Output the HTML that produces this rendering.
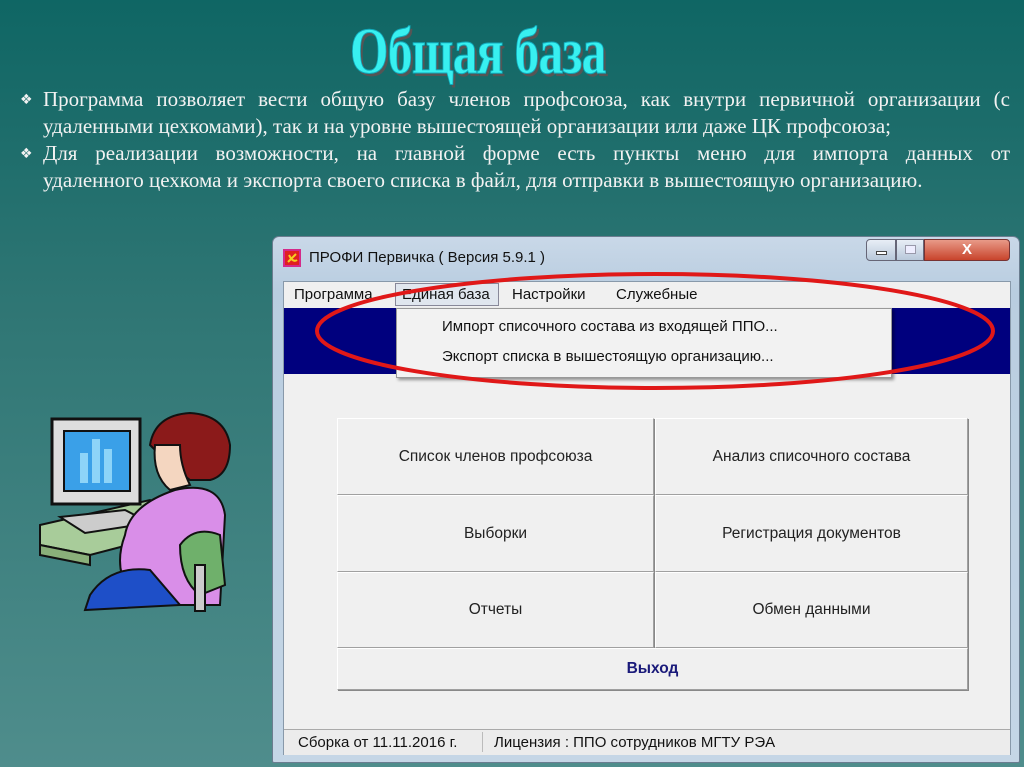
<!DOCTYPE html>
<html><head><meta charset="utf-8"><style>
*{margin:0;padding:0;box-sizing:border-box}
body{width:1024px;height:767px;overflow:hidden;position:relative;background:linear-gradient(180deg,#0f6664 0%,#2f7674 40%,#4f8d8c 100%);font-family:"Liberation Sans","DejaVu Sans",sans-serif}
.title{position:absolute;left:350px;top:14px;font-family:"Liberation Serif",serif;font-size:66px;color:#38f0f0;transform:scaleX(0.75);transform-origin:left top;text-shadow:3px 3px 0 #555;letter-spacing:-1px;font-weight:bold;-webkit-text-stroke:1px #1ab;}
.txt{position:absolute;left:20px;top:86px;width:990px;font-family:"Liberation Serif",serif;font-size:21px;line-height:27px;color:#f2f2f2}
.txt p{padding-left:23px;position:relative;white-space:nowrap}
.txt .j{display:block;text-align:justify;text-align-last:justify;white-space:normal}
.txt p:before{content:"❖";position:absolute;left:0;top:1px;font-size:14px;font-family:"DejaVu Sans",sans-serif}
.sans{font-family:"Liberation Sans",sans-serif}
.win{position:absolute;left:272px;top:236px;width:748px;height:527px;background:linear-gradient(180deg,#c9d8e8,#b9cde0 10%,#c5d6e6);border:1px solid #6b7d90;border-radius:7px 7px 2px 2px}
.client{position:absolute;left:10px;top:44px;width:728px;height:474px;background:#f0f0f0;border:1px solid #8899aa}
.t{position:absolute;font-size:14px;color:#111}
.btn{position:absolute;background:#f0f0f0;border:1px solid #a0a0a0;border-top-color:#fff;border-left-color:#fff;box-shadow:1px 1px 0 #888;display:flex;align-items:center;justify-content:center;font-size:15.5px;color:#222}
</style></head><body>
<div class="title">Общая база</div>
<div class="txt">
<p><span class="j">Программа позволяет вести общую базу членов профсоюза, как внутри первичной организации (с</span>удаленными цехкомами), так и на уровне вышестоящей организации или даже ЦК профсоюза;</p>
<p><span class="j">Для реализации возможности, на главной форме есть пункты меню для импорта данных от</span>удаленного цехкома и экспорта своего списка в файл, для отправки в вышестоящую организацию.</p>
</div>

<svg style="position:absolute;left:30px;top:405px" width="210" height="210" viewBox="0 0 210 210">
<polygon points="10,120 120,95 175,120 60,150 10,140" fill="#a8cc9a" stroke="#111" stroke-width="2"/>
<polygon points="10,140 60,150 60,160 10,150" fill="#8ab07a" stroke="#111" stroke-width="2"/>
<rect x="22" y="14" width="88" height="85" fill="#ddd" stroke="#111" stroke-width="3"/>
<rect x="34" y="26" width="66" height="60" fill="#3aa0e8" stroke="#111" stroke-width="2"/>
<rect x="50" y="48" width="8" height="30" fill="#8dd4f8"/><rect x="62" y="34" width="8" height="44" fill="#8dd4f8"/><rect x="74" y="44" width="8" height="34" fill="#8dd4f8"/>
<polygon points="30,112 95,105 120,118 55,128" fill="#ccc" stroke="#111" stroke-width="2"/>
<path d="M120,40 Q125,10 160,8 Q195,10 200,40 Q200,70 180,75 L160,75 Q140,60 120,40Z" fill="#8b1a1a" stroke="#111" stroke-width="2"/>
<path d="M125,40 Q122,70 140,85 L160,80 Q150,60 150,40Z" fill="#f4d6c0" stroke="#111" stroke-width="2"/>
<path d="M145,85 Q190,75 195,110 L190,200 L110,200 Q80,170 95,130 Q100,100 145,85Z" fill="#d98ee8" stroke="#111" stroke-width="2"/>
<path d="M150,140 Q165,120 190,130 L195,180 L170,190 Q150,175 150,140Z" fill="#6fb06b" stroke="#111" stroke-width="2"/>
<path d="M60,190 Q80,160 120,165 L150,200 L55,205Z" fill="#1e4fc8" stroke="#111" stroke-width="2"/>
<rect x="165" y="160" width="10" height="46" fill="#ccc" stroke="#111" stroke-width="2"/>
</svg>

<div class="win sans">
 <svg style="position:absolute;left:10px;top:12px" width="18" height="18"><rect width="18" height="18" fill="#d42a8a"/><rect x="2" y="2" width="14" height="14" fill="#e02020"/><path d="M5,13 L13,5 M6,6 Q10,14 14,11" stroke="#f5d020" stroke-width="2" fill="none"/></svg>
 <div class="t" style="left:36px;top:12px;font-size:15px">ПРОФИ Первичка  ( Версия 5.9.1 )</div>
 <div style="position:absolute;left:593px;top:2px;width:30px;height:22px;border:1px solid #667;border-radius:4px 0 0 4px;background:linear-gradient(#e8eef6,#b8c8da)"><div style="position:absolute;left:9px;top:11px;width:11px;height:4px;border:1px solid #444;background:#fff"></div></div>
 <div style="position:absolute;left:623px;top:2px;width:28px;height:22px;border:1px solid #667;background:linear-gradient(#e8eef6,#b8c8da)"><div style="position:absolute;left:8px;top:5px;width:11px;height:9px;border:1px solid #99a;background:#eef"></div></div>
 <div style="position:absolute;left:651px;top:2px;width:86px;height:22px;border:1px solid #733;border-radius:0 4px 4px 0;background:linear-gradient(#e89a88,#c8442c);color:#fff;text-align:center;font-weight:bold;font-size:15px;line-height:20px">X</div>
 <div class="client">
  <div style="position:absolute;left:0;top:0;width:726px;height:26px;background:#f0f0f0"></div>
  <div class="t" style="left:10px;top:4px;font-size:15px">Программа</div>
  <div style="position:absolute;left:111px;top:1px;width:104px;height:23px;border:1px solid #889;background:#e0e6ee"></div>
  <div class="t" style="left:118px;top:4px;font-size:15px">Единая база</div>
  <div class="t" style="left:228px;top:4px;font-size:15px">Настройки</div>
  <div class="t" style="left:332px;top:4px;font-size:15px">Служебные</div>
  <div style="position:absolute;left:0;top:26px;width:726px;height:66px;background:#00007e"></div>
  <div style="position:absolute;left:112px;top:26px;width:496px;height:70px;background:#f2f2f2;border:1px solid #999;box-shadow:2px 2px 3px rgba(0,0,0,.4)"></div>
  <div class="t" style="left:158px;top:36px;font-size:15px">Импорт списочного состава из входящей ППО...</div>
  <div class="t" style="left:158px;top:66px;font-size:15px">Экспорт списка в вышестоящую организацию...</div>
  <div class="btn" style="left:53px;top:136px;width:317px;height:77px">Список членов профсоюза</div>
  <div class="btn" style="left:371px;top:136px;width:313px;height:77px">Анализ списочного состава</div>
  <div class="btn" style="left:53px;top:213px;width:317px;height:77px">Выборки</div>
  <div class="btn" style="left:371px;top:213px;width:313px;height:77px">Регистрация документов</div>
  <div class="btn" style="left:53px;top:290px;width:317px;height:76px">Отчеты</div>
  <div class="btn" style="left:371px;top:290px;width:313px;height:76px">Обмен данными</div>
  <div class="btn" style="left:53px;top:366px;width:631px;height:42px;color:#1a1a7a;font-weight:bold">Выход</div>
  <div style="position:absolute;left:0;top:447px;width:726px;height:26px;border-top:1px solid #aaa;background:#ececec"></div>
  <div class="t" style="left:14px;top:452px;font-size:15px">Сборка от 11.11.2016 г.</div>
  <div style="position:absolute;left:198px;top:450px;width:1px;height:20px;background:#bbb"></div>
  <div class="t" style="left:210px;top:452px;font-size:15px">Лицензия : ППО сотрудников МГТУ РЭА</div>
 </div>
</div>
<svg style="position:absolute;left:0;top:0" width="1024" height="767"><ellipse cx="655" cy="331" rx="338" ry="57" fill="none" stroke="#e01818" stroke-width="4"/></svg>
</body></html>
